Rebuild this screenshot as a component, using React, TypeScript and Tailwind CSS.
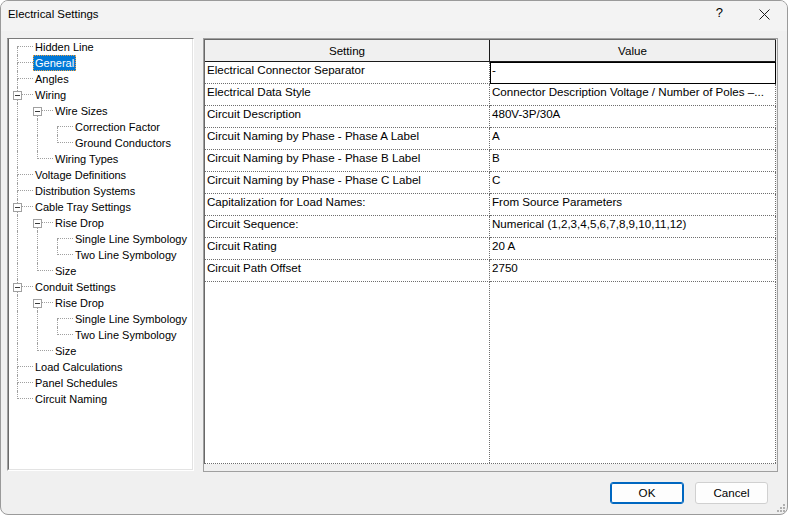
type TreeNode = { label: string; selected?: boolean; children?: TreeNode[] }

type FlatRow = {
  label: string
  depth: number
  guides: boolean[]
  hasPrev: boolean
  hasNext: boolean
  expandable: boolean
  selected: boolean
}

const tree: TreeNode[] = [
  { label: 'Hidden Line' },
  { label: 'General', selected: true },
  { label: 'Angles' },
  {
    label: 'Wiring',
    children: [
      { label: 'Wire Sizes', children: [{ label: 'Correction Factor' }, { label: 'Ground Conductors' }] },
      { label: 'Wiring Types' },
    ],
  },
  { label: 'Voltage Definitions' },
  { label: 'Distribution Systems' },
  {
    label: 'Cable Tray Settings',
    children: [
      { label: 'Rise Drop', children: [{ label: 'Single Line Symbology' }, { label: 'Two Line Symbology' }] },
      { label: 'Size' },
    ],
  },
  {
    label: 'Conduit Settings',
    children: [
      { label: 'Rise Drop', children: [{ label: 'Single Line Symbology' }, { label: 'Two Line Symbology' }] },
      { label: 'Size' },
    ],
  },
  { label: 'Load Calculations' },
  { label: 'Panel Schedules' },
  { label: 'Circuit Naming' },
]

function flatten(nodes: TreeNode[], depth: number, guides: boolean[]): FlatRow[] {
  const out: FlatRow[] = []
  nodes.forEach((n, i) => {
    const hasNext = i < nodes.length - 1
    out.push({
      label: n.label,
      depth,
      guides,
      hasPrev: i > 0,
      hasNext,
      expandable: !!n.children,
      selected: !!n.selected,
    })
    if (n.children) out.push(...flatten(n.children, depth + 1, [...guides, hasNext]))
  })
  return out
}

const rows: Array<[string, string]> = [
  ['Electrical Connector Separator', '-'],
  ['Electrical Data Style', 'Connector Description Voltage / Number of Poles –...'],
  ['Circuit Description', '480V-3P/30A'],
  ['Circuit Naming by Phase - Phase A Label', 'A'],
  ['Circuit Naming by Phase - Phase B Label', 'B'],
  ['Circuit Naming by Phase - Phase C Label', 'C'],
  ['Capitalization for Load Names:', 'From Source Parameters'],
  ['Circuit Sequence:', 'Numerical (1,2,3,4,5,6,7,8,9,10,11,12)'],
  ['Circuit Rating', '20 A'],
  ['Circuit Path Offset', '2750'],
]

function TreeRow({ row }: { row: FlatRow }) {
  return (
    <div className="flex h-[16px] items-stretch">
      {row.guides.map((g, i) => (
        <div key={i} className="w-[20px] shrink-0">
          {g && <div className="ml-[8px] h-full border-l border-dotted border-[#a0a0a0]" />}
        </div>
      ))}
      <div className="relative flex w-[24px] shrink-0 flex-col">
        <div
          className={`ml-[8px] h-[8px] border-b border-dotted border-[#a0a0a0] ${row.hasPrev ? 'border-l' : ''}`}
        />
        <div className={`ml-[8px] h-[8px] border-dotted border-[#a0a0a0] ${row.hasNext ? 'border-l' : ''}`} />
        {row.expandable && (
          <div className="absolute left-[4px] top-[4px] flex h-[9px] w-[9px] items-center justify-center border border-[#a0a0a0] bg-white">
            <div className="h-px w-[5px] bg-[#3a3a3a]" />
          </div>
        )}
      </div>
      <span
        className={`whitespace-nowrap px-[2px] leading-[16px] ${
          row.selected
            ? 'bg-[#0078d7] text-white outline-1 outline-dotted outline-[#f0a040] -outline-offset-1'
            : 'text-black'
        }`}
      >
        {row.label}
      </span>
    </div>
  )
}

export default function App() {
  const flat = flatten(tree, 0, [])

  return (
    <div
      className="relative flex h-[515px] w-[788px] flex-col overflow-hidden rounded-[8px] border border-[#9a9a9a] bg-[#f0f0f0] text-black"
      style={{ fontFamily: '"Liberation Sans", Arial, sans-serif' }}
    >
      {/* title bar */}
      <div className="flex h-[30px] shrink-0 items-start bg-[#f3f3f3] pl-[7px] pt-[5px]">
        <span className="text-[11.4px] leading-[16px]">Electrical Settings</span>
        <span className="ml-auto mr-[36px] mt-[-1px] text-[13px] leading-[16px]">?</span>
        <svg className="mr-[17px] mt-[3px]" width="11" height="11" viewBox="0 0 11 11">
          <path d="M0.5 0.5 L10.5 10.5 M10.5 0.5 L0.5 10.5" stroke="#1a1a1a" strokeWidth="1" />
        </svg>
      </div>

      {/* body */}
      <div className="mt-[7px] flex gap-[9px] pl-[6px]">
        {/* tree */}
        <div className="h-[433px] w-[187px] shrink-0 border-l border-t border-b border-r border-l-[#a0a0a0] border-t-[#7a7a7a] border-r-white border-b-white">
          <div className="h-full w-full overflow-hidden border-l border-b border-r border-l-[#696969] border-r-[#e3e3e3] border-b-[#e3e3e3] bg-white text-[11px]">
            {flat.map((r, i) => (
              <TreeRow key={i} row={r} />
            ))}
          </div>
        </div>

        {/* settings grid */}
        <div className="flex h-[434px] w-[575px] shrink-0 flex-col border border-[#a0a0a0] bg-[#f0f0f0]">
          <div className="flex h-[425px] w-[572px] flex-col border-l border-t border-[#696969] bg-white text-[11.6px]">
            <div className="flex h-[22px] shrink-0 border-b border-[#1a1a1a] bg-[#f0f0f0]">
              <div className="w-[285px] border-r border-[#1a1a1a] pt-[3px] text-center leading-[16px]">Setting</div>
              <div className="w-[286px] border-r border-[#1a1a1a] pt-[3px] text-center leading-[16px]">Value</div>
            </div>
            {rows.map(([k, v], i) => (
              <div key={i} className="flex h-[22px] shrink-0">
                <div className="w-[285px] truncate border-b border-r border-dotted border-[#6e6e6e] pl-[2px] leading-[16px]">
                  {k}
                </div>
                <div
                  className={`w-[286px] truncate pl-[2px] leading-[16px] ${
                    i === 0
                      ? 'border-b border-r border-black shadow-[inset_1px_1px_0_#000]'
                      : 'border-b border-r border-dotted border-[#6e6e6e]'
                  }`}
                >
                  {v}
                </div>
              </div>
            ))}
            <div className="flex flex-1 border-b border-dotted border-[#6e6e6e]">
              <div className="w-[285px] border-r border-dotted border-[#6e6e6e]" />
              <div className="w-[286px] border-r border-dotted border-[#6e6e6e]" />
            </div>
          </div>
        </div>
      </div>

      {/* footer */}
      <div className="mt-[10px] flex justify-end gap-[11px] pr-[19px] text-[11.6px]">
        <button
          type="button"
          className="h-[22px] w-[74px] rounded-[3px] border border-[#0067c0] bg-[#fdfdfd] leading-[16px] shadow-[inset_0_0_0_1px_#0067c0]"
        >
          OK
        </button>
        <button
          type="button"
          className="h-[22px] w-[73px] rounded-[3px] border border-[#d0d0d0] bg-[#fdfdfd] leading-[16px]"
        >
          Cancel
        </button>
      </div>

      {/* resize grip */}
      <svg className="absolute bottom-[2px] right-[2px]" width="9" height="9" viewBox="0 0 9 9">
        <rect x="7" y="1" width="2" height="2" fill="#b0b0b0" />
        <rect x="4" y="4" width="2" height="2" fill="#b0b0b0" />
        <rect x="7" y="4" width="2" height="2" fill="#b0b0b0" />
        <rect x="1" y="7" width="2" height="2" fill="#b0b0b0" />
        <rect x="4" y="7" width="2" height="2" fill="#b0b0b0" />
        <rect x="7" y="7" width="2" height="2" fill="#b0b0b0" />
      </svg>
    </div>
  )
}
